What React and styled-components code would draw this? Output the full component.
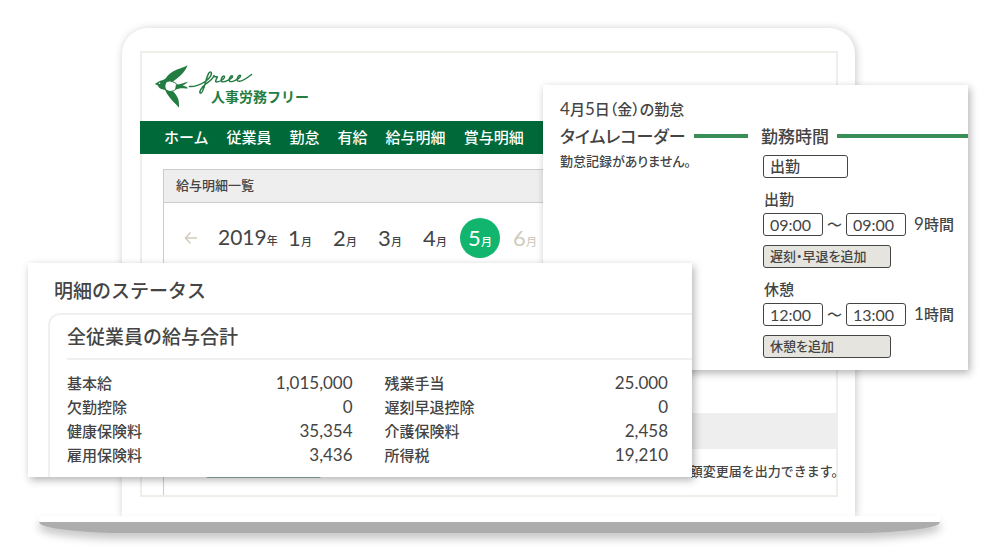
import styled, { createGlobalStyle, css } from "styled-components";

const GlobalStyle = createGlobalStyle`
  * {
    box-sizing: border-box;
  }
  body {
    margin: 0;
    background-color: #fff;
    color: #444;
    font-family: "Noto Sans CJK JP", sans-serif;
    font-weight: 500;
  }
  h1, h2, h3, p, ul, dl, dd {
    margin: 0;
    padding: 0;
    font-weight: 500;
  }
  button, input {
    font-family: inherit;
    font-weight: inherit;
    font-feature-settings: inherit;
    color: inherit;
    margin: 0;
  }
`;

const Stage = styled.main`
  position: relative;
  min-height: 100vh;
  padding: 28px 60px 27px 39px;
  overflow: hidden;
`;

const Lid = styled.div`
  margin: 0 85px 0 83px;
  padding: 23px 17px 19px 18px;
  border-radius: 26px 26px 0 0;
  background-color: #fff;
  box-shadow: 1px 1px 8px rgba(0, 0, 0, 0.22);
`;

const Base = styled.div`
  position: relative;
  height: 17px;
  border-top: 6px solid #fff;
  border-radius: 0 0 90px 90px / 0 0 11px 11px;
  background-color: #adadad;
  box-shadow: 0 6px 8px rgba(0, 0, 0, 0.22);
`;

const Screen = styled.div`
  border: 2px solid #efefe9;
  background-color: #fff;
`;

const Header = styled.header`
  padding: 11px 12px 12px;
`;

const Logo = styled.a`
  display: inline-grid;
  vertical-align: top;
  color: #237d43;
  text-decoration: none;
  svg,
  span {
    grid-area: 1 / 1;
  }
  span {
    align-self: end;
    padding: 0 0 3px 57px;
    font-size: 14px;
    line-height: 20px;
    font-weight: 700;
  }
`;

const Nav = styled.nav`
  display: flex;
  gap: 18px;
  margin: 0 -2px;
  padding: 0 24px 2px;
  overflow: hidden;
  background-color: #00693a;
  a {
    color: #fff;
    font-size: 15px;
    line-height: 31px;
    white-space: nowrap;
    text-decoration: none;
  }
`;

const Panel = styled.section`
  margin: 15px -2px 0 21px;
  border-top: 1px solid #ccc;
  border-left: 1px solid #ccc;
`;

const PanelTitle = styled.h2`
  padding: 0 12px 2px;
  border-bottom: 1px solid #ccc;
  background-color: #eee;
  font-size: 13px;
  line-height: 30px;
`;

const Months = styled.div`
  display: flex;
  align-items: center;
  gap: 5px;
  padding: 15px 20px;
`;

const ArrowButton = styled.button`
  display: flex;
  padding: 0;
  border: 0;
  margin-right: 15px;
  background: none;
  color: #cfcbbd;
`;

const dateText = css`
  height: 40px;
  font-family: Lato, "Noto Sans CJK JP", sans-serif;
  font-size: 22px;
  font-weight: 400;
  line-height: 38px;
  white-space: nowrap;
  small {
    font-size: 11px;
    font-weight: 500;
    line-height: 1;
  }
`;

const Year = styled.span`
  ${dateText}
  width: 57px;
  font-size: 21px;
`;

const Month = styled.button`
  ${dateText}
  width: 40px;
  padding: 0;
  border: 0;
  border-radius: 50%;
  background-color: ${(props) => (props.$ativo ? "#12b56e" : "transparent")};
  color: ${(props) =>
    props.$ativo ? "#fff" : props.$futuro ? "#cfcbbd" : "#444"};
`;

const Strip = styled.div`
  height: 36px;
  margin-top: 140px;
  background-color: #eee;
`;

const Notice = styled.div`
  display: flex;
  align-items: flex-end;
  justify-content: space-between;
  padding: 12px 0 14px 42px;
  p {
    font-size: 13px;
    line-height: 20px;
    font-feature-settings: "halt";
  }
`;

const NoticeBar = styled.span`
  width: 115px;
  height: 10px;
  margin-bottom: 3px;
  border-radius: 2px;
  background-color: #8fb8ac;
`;

const Card = styled.section`
  position: absolute;
  background-color: #fff;
  box-shadow: 2px 3px 8px rgba(0, 0, 0, 0.3);
`;

const TimeCard = styled(Card)`
  top: 85px;
  left: 543px;
  right: 32px;
  padding: 12px 0 12px 17px;
  font-feature-settings: "palt";
`;

const TimeTitle = styled.h2`
  font-size: 15px;
  line-height: 24px;
`;

const Digit = styled.span`
  font-family: Lato, sans-serif;
  font-size: 17px;
  font-weight: 400;
  line-height: 1;
`;

const TimeColumns = styled.div`
  display: grid;
  grid-template-columns: 188px 1fr;
  column-gap: 13px;
`;

const Heading = styled.h3`
  display: flex;
  align-items: center;
  gap: 8px;
  font-size: 17px;
  line-height: 30px;
  white-space: nowrap;
  &::after {
    content: "";
    flex: 1;
    height: 4px;
    background-color: #388e55;
  }
`;

const Empty = styled.p`
  font-size: 13px;
  line-height: 20px;
`;

const Work = styled.div`
  display: flex;
  flex-direction: column;
  align-items: flex-start;
  padding: 4px 0 0 2px;
`;

const box = css`
  height: 23px;
  padding: 0 6px;
  border: 1px solid #444;
  border-radius: 3px;
  background-color: #fff;
`;

const WorkButton = styled.button`
  ${box}
  padding-bottom: 2px;
  width: ${(props) => (props.$cinza ? "128px" : "85px")};
  background-color: ${(props) => (props.$cinza ? "#e5e4df" : "#fff")};
  font-size: ${(props) => (props.$cinza ? "13px" : "15px")};
  line-height: 19px;
  text-align: left;
`;

const WorkLabel = styled.span`
  padding-left: 1px;
  margin-top: 10px;
  font-size: 15px;
  line-height: 22px;
`;

const WorkRow = styled.div`
  display: flex;
  align-items: center;
  height: 23px;
  margin: 3px 0 9px;
  font-size: 15px;
  line-height: 21px;
  white-space: nowrap;
`;

const TimeInput = styled.input`
  ${box}
  width: 60px;
  font-family: Lato, sans-serif;
  font-size: 16px;
  font-weight: 400;
`;

const Tilde = styled.span`
  width: 23px;
  padding-bottom: 2px;
  text-align: center;
`;

const Total = styled.span`
  padding: 0 0 2px 8px;
`;

const StatusCard = styled(Card)`
  top: 263px;
  left: 28px;
  right: 308px;
  padding: 12px 0 0 20px;
`;

const StatusTitle = styled.h2`
  padding-left: 6px;
  font-size: 19px;
  line-height: 30px;
`;

const Summary = styled.div`
  margin-top: 8px;
  padding: 7px 0 10px 17px;
  border: solid #f0f0f0;
  border-width: 2px 0 0 2px;
  border-radius: 12px 0 0 0;
`;

const SummaryTitle = styled.h3`
  padding-bottom: 8px;
  border-bottom: 2px solid #f0f0f0;
  font-size: 19px;
  line-height: 28px;
`;

const Table = styled.table`
  width: calc(100% - 24px);
  margin-top: 11px;
  border-collapse: collapse;
  table-layout: fixed;
  th,
  td {
    width: 24%;
    height: 24px;
    padding: 0;
    font-size: 15px;
    line-height: 24px;
    font-weight: 500;
    text-align: left;
    white-space: nowrap;
  }
  td {
    font-family: Lato, sans-serif;
    font-size: 17px;
    font-weight: 400;
    text-align: right;
  }
  td + th {
    width: 29%;
    padding-left: 32px;
  }
`;

const menu = ["ホーム", "従業員", "勤怠", "有給", "給与明細", "賞与明細"];

const salary = [
  ["基本給", "1,015,000", "残業手当", "25.000"],
  ["欠勤控除", "0", "遅刻早退控除", "0"],
  ["健康保険料", "35,354", "介護保険料", "2,458"],
  ["雇用保険料", "3,436", "所得税", "19,210"],
];

const LogoMark = () => (
  <svg width="100" height="45" viewBox="0 0 100 45" aria-hidden="true">
    <g fill="currentColor">
      <path d="M1 19.700 C3 19 4.500 17 7 16.400 C9 16 10 16 11.500 14.500 C14 10.500 18 7.500 23 5.500 C27 4 30.500 2.800 33.500 1.200 C32.500 4.500 30 8 27 11 C24.500 13.500 21.500 15.500 19 17.500 C16 17.300 13.500 17.500 12.500 18.500 C11 20.500 11 23.500 12.500 25.800 C15 27.300 17 27.300 19 27.300 C21.500 30 23.500 32.500 24.500 36 C25 38.500 25.200 41 25 43.700 C21.500 39.500 16.500 35.500 13.500 30.500 C12.500 29 11.700 27.500 11 25.800 C7.500 25.500 4.500 24 4 21.500 C3 21 2 20.700 1 19.700Z" />
      <path d="M22 20.500 C26 20.700 30 18.600 34 17.700 C32.500 19.500 30.500 20.400 28.700 21.800 C30.500 22.300 33 22.500 34 24.200 C31 24.700 28 23.900 24.500 24.700 C23 25 22 25.500 21 26Z" />
    </g>
    <path
      d="M17 17.500 C20 17.500 22 19.500 24.500 22 C22 26 19.500 27.300 16.500 27.300"
      fill="none"
      stroke="currentColor"
      strokeWidth="1"
    />
    <circle cx="5.500" cy="19.300" r="0.800" fill="#fff" />
    <path
      d="M35.500 22.600 C41 22.800 47 20.500 52 17 C56 14 58.500 10 57 8.200 C55 6.500 53 13 51.500 18 C50 24 48.500 29.500 46.500 29.300 C44.500 29 47 23 53 19 C57 16.500 59 14 60 11.500 C60 14 63 12 63.500 12.800 C62.500 15 60.500 18 62.500 18 C66 18 71 14.500 70.500 12.500 C69.500 10.500 66 15 67.500 17.200 C69.500 19.500 78.500 14.500 78.500 12.200 C77.500 10.200 74 15 75.500 17 C77.500 19.300 86.500 14 86.500 11.700 C85.500 9.800 82 14.500 83.500 16.700 C86 19 92.500 14.500 97.500 10.500"
      fill="none"
      stroke="currentColor"
      strokeWidth="1.500"
      strokeLinecap="round"
      strokeLinejoin="round"
    />
  </svg>
);

const TimeRange = (props) => (
  <WorkRow>
    <TimeInput aria-label={`${props.nome} 開始`} defaultValue={props.inicio} />
    <Tilde>～</Tilde>
    <TimeInput aria-label={`${props.nome} 終了`} defaultValue={props.fim} />
    <Total>
      <Digit>{props.total}</Digit>時間
    </Total>
  </WorkRow>
);

const App = () => {
  return (
    <>
      <GlobalStyle />
      <Stage>
        <Lid>
          <Screen>
            <Header>
              <Logo href="#">
                <LogoMark />
                <span>人事労務フリー</span>
              </Logo>
            </Header>
            <Nav>
              {menu.map((item) => (
                <a key={item} href="#">
                  {item}
                </a>
              ))}
            </Nav>
            <Panel>
              <PanelTitle>給与明細一覧</PanelTitle>
              <Months>
                <ArrowButton aria-label="前の年">
                  <svg width="14" height="14" viewBox="0 0 14 14">
                    <path
                      d="M6.500 1.500 L1.500 7 L6.500 12.500 M1.500 7 H13"
                      fill="none"
                      stroke="currentColor"
                      strokeWidth="1.500"
                    />
                  </svg>
                </ArrowButton>
                <Year>
                  2019<small>年</small>
                </Year>
                {[1, 2, 3, 4, 5, 6].map((mes) => (
                  <Month key={mes} $ativo={mes === 5} $futuro={mes > 5}>
                    {mes}
                    <small>月</small>
                  </Month>
                ))}
              </Months>
              <Strip />
              <Notice>
                <NoticeBar />
                <p>額変更届を出力できます。</p>
              </Notice>
            </Panel>
          </Screen>
        </Lid>
        <Base />

        <TimeCard>
          <TimeTitle>
            <Digit>4</Digit>月<Digit>5</Digit>日（金）の勤怠
          </TimeTitle>
          <TimeColumns>
            <div>
              <Heading>タイムレコーダー</Heading>
              <Empty>勤怠記録がありません。</Empty>
            </div>
            <div>
              <Heading>勤務時間</Heading>
              <Work>
                <WorkButton>出勤</WorkButton>
                <WorkLabel>出勤</WorkLabel>
                <TimeRange nome="出勤" inicio="09:00" fim="09:00" total="9" />
                <WorkButton $cinza>遅刻・早退を追加</WorkButton>
                <WorkLabel>休憩</WorkLabel>
                <TimeRange nome="休憩" inicio="12:00" fim="13:00" total="1" />
                <WorkButton $cinza>休憩を追加</WorkButton>
              </Work>
            </div>
          </TimeColumns>
        </TimeCard>

        <StatusCard>
          <StatusTitle>明細のステータス</StatusTitle>
          <Summary>
            <SummaryTitle>全従業員の給与合計</SummaryTitle>
            <Table>
              <tbody>
                {salary.map(([nome, valor, nome2, valor2]) => (
                  <tr key={nome}>
                    <th scope="row">{nome}</th>
                    <td>{valor}</td>
                    <th scope="row">{nome2}</th>
                    <td>{valor2}</td>
                  </tr>
                ))}
              </tbody>
            </Table>
          </Summary>
        </StatusCard>
      </Stage>
    </>
  );
};

export default App;
